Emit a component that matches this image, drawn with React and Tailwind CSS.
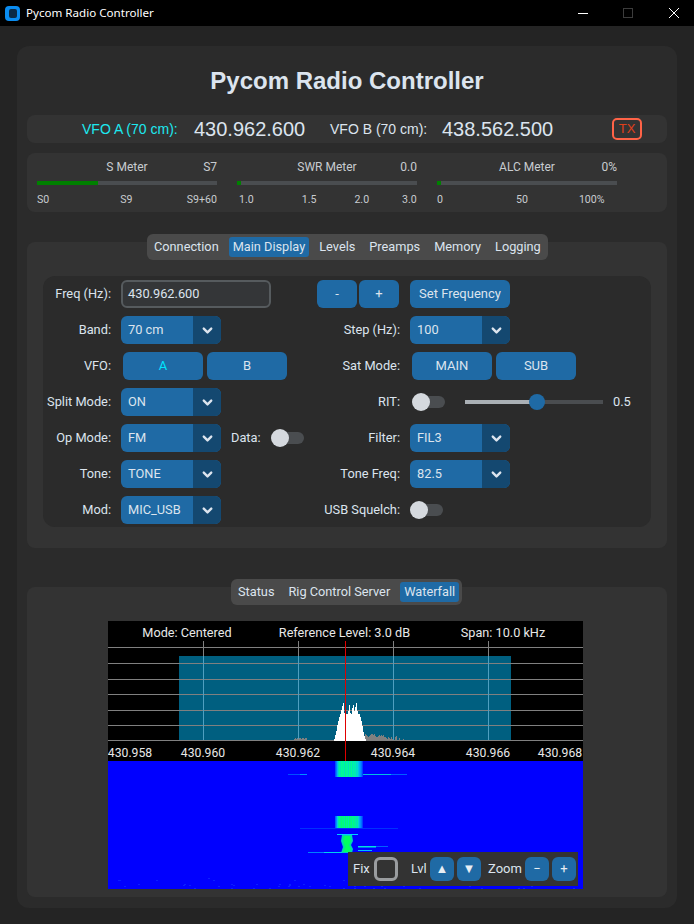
import { ChevronDown } from "lucide-react";

const UI_FONT = "font-['Roboto',sans-serif]";

// white signal hump, heights above the baseline, one per pixel from x=334
const SIGNAL = [2, 6, 10, 16, 20, 24, 27, 31, 35, 38, 28, 27, 27, 27, 30, 36, 28, 27, 33, 36, 30, 34, 38, 30, 27, 27, 24, 20, 15, 9, 5, 2];
const NOISE_LEFT = [1, 0, 1, 1, 1, 0, 2, 3, 2, 3, 2, 3, 3, 2, 3, 3, 2, 3, 3];
const NOISE_RIGHT = [7, 6, 5, 4, 5, 6, 7, 7, 6, 7, 5, 4, 4, 5, 6, 5, 6, 5, 6, 4, 4, 3, 2, 4, 3, 2, 4, 2, 1, 0, 4, 5, 1, 1, 3, 1, 0, 0, 2, 1, 1, 1];

const GRID_Y = [647, 663, 679, 694, 710, 725, 740];
const GRID_X = [203, 298, 393, 488];
const AXIS = [
	["430.958", 130],
	["430.960", 203],
	["430.962", 298],
	["430.964", 393],
	["430.966", 488],
	["430.968", 560],
];

// waterfall columns, left to right
const BAND_TOP = ["#0050ff", "#0080ff", "#00b8f8", "#00e0c0", "#00f8a0", "#00e8b0", "#00ff90", "#00f0a8", "#00ff90", "#00e0c0", "#00ff88", "#00f0a8", "#00f8a0", "#00e0c0", "#00ff90", "#00e8b0", "#00ff90", "#00e0c0", "#00f8a0", "#00e8b8", "#00f0b0", "#00d8d0", "#00e0c8", "#00c0f0", "#00a8f8", "#0090ff", "#0070ff", "#0040ff"];
const BAND_LOW = ["#0060ff", "#0090ff", "#00d0e8", "#00f0a0", "#00ff80", "#00f090", "#00ff70", "#00f090", "#00ff78", "#00e8a8", "#00ff70", "#00f098", "#00ff78", "#00e8b0", "#00ff70", "#00f090", "#00ff78", "#00e8a8", "#00ff80", "#00f098", "#00f0a0", "#00e0b8", "#00f0a0", "#00d0e0", "#00b0f0", "#0090ff", "#0070ff", "#0040ff"];

function Dropdown({ value }) {
	return (
		<div className="flex h-[28px] w-[100px] overflow-hidden rounded-[6px] bg-[#1f6aa5] text-[12.8px] text-[#dce4ee]">
			<span className="flex-1 pl-[7px] leading-[28px]">{value}</span>
			<span className="flex w-[28px] items-center justify-center bg-[#144870]">
				<ChevronDown className="h-[15px] w-[15px]" strokeWidth={3.8} />
			</span>
		</div>
	);
}

function Toggle({ className = "" }) {
	return (
		<div className={`relative h-[18px] w-[33px] shrink-0 ${className}`}>
			<span className="absolute left-[2px] right-0 top-[3px] h-[12px] rounded-full bg-[#4a4d50]" />
			<span className="absolute left-0 top-0 h-[18px] w-[18px] rounded-full bg-[#d5d9de]" />
		</div>
	);
}

function Btn({ children, className = "" }) {
	return (
		<button className={`h-[28px] rounded-[6px] bg-[#1f6aa5] text-[13px] text-[#dce4ee] ${className}`}>
			{children}
		</button>
	);
}

function Row({ left, leftControl, right, rightControl }) {
	return (
		<div className="flex h-[28px] items-center">
			<div className="flex w-[257px] shrink-0 items-center">
				<span className="w-[68px] shrink-0 whitespace-nowrap text-right text-[12.8px] text-[#dce4ee]">{left}</span>
				<div className="ml-[10px] flex shrink-0 items-center">{leftControl}</div>
			</div>
			<span className="flex w-[100px] shrink-0 justify-end whitespace-nowrap text-right text-[12.8px] text-[#dce4ee]">{right}</span>
			<div className="ml-[10px] flex items-center">{rightControl}</div>
		</div>
	);
}

function Meter({ title, value, fill, children }) {
	return (
		<div className="w-[180px]">
			<div className="grid h-[14px] grid-cols-[1fr_auto_1fr] items-center text-[12px] leading-[14px] text-[#c8ccd0]">
				<span />
				<span>{title}</span>
				<span className="text-right">{value}</span>
			</div>
			<div className="mt-[7px] h-[4px] bg-[#4a4d50]">
				<div className={`h-full bg-[#008000] ${fill}`} />
			</div>
			<div className="mt-[9px] flex h-[12px] items-center text-[10.6px] leading-[12px] text-[#c8ccd0]">{children}</div>
		</div>
	);
}

function TabBar({ tabs, active, className = "" }) {
	return (
		<div className={`relative z-10 flex h-[26px] items-center gap-[6px] rounded-[6px] bg-[#4a4a4a] px-[3px] text-[12.75px] text-[#dce4ee] ${className}`}>
			{tabs.map((t) => (
				<span key={t} className={`h-[20px] rounded-[3px] px-[4px] leading-[20px] ${t === active ? "bg-[#1f6aa5]" : ""}`}>
					{t}
				</span>
			))}
		</div>
	);
}

function SpectrumChart() {
	// faint speckle along the bottom of the waterfall
	const specks = [];
	for (let i = 1; i <= 70; i++) {
		specks.push([108 + ((i * i * 37 + i * 11) % 475), 878 + ((i * i * 13) % 11)]);
	}
	return (
		<svg viewBox="108 621 475 268" className="block h-[268px] w-[475px]">
			<rect x="108" y="621" width="475" height="268" fill="#000" />
			<rect x="179" y="656" width="332" height="84" fill="#005f80" />
			{GRID_Y.map((y) => (
				<line key={y} x1="108" x2="583" y1={y + 0.5} y2={y + 0.5} stroke="#808080" />
			))}
			{GRID_X.map((x) => (
				<g key={x}>
					<line x1={x + 0.5} x2={x + 0.5} y1="641" y2="656" stroke="#808080" />
					<line x1={x + 0.5} x2={x + 0.5} y1="656" y2="740" stroke="#4f9fc0" />
				</g>
			))}
			{NOISE_LEFT.map((h, i) => (
				<rect key={i} x={288 + i} y={741 - h} width="1" height={h} fill="#808080" />
			))}
			{NOISE_RIGHT.map((h, i) => (
				<rect key={i} x={365 + i} y={741 - h} width="1" height={h} fill="#808080" />
			))}
			{SIGNAL.map((h, i) => (
				<rect key={i} x={334 + i} y={741 - h} width="1" height={h} fill="#fff" />
			))}

			<g fontFamily="Roboto, sans-serif" fill="#e8e8e8">
				<g fontSize="12.7">
					<text x="187" y="637" textAnchor="middle">Mode: Centered</text>
					<text x="344.5" y="637" textAnchor="middle">Reference Level: 3.0 dB</text>
					<text x="503" y="637" textAnchor="middle">Span: 10.0 kHz</text>
				</g>
				<g fontSize="12.2">
					{AXIS.map(([label, x]) => (
						<text key={label} x={x} y="757" textAnchor="middle">{label}</text>
					))}
				</g>
			</g>

			<rect x="108" y="761" width="475" height="128" fill="#0000ff" />
			{specks.map(([x, y], i) => (
				<rect key={i} x={x} y={y} width="2" height="1" fill="#0a20ff" />
			))}
			{BAND_TOP.map((c, i) => (
				<rect key={i} x={335 + i} y="761" width="1" height="16" fill={c} />
			))}
			{BAND_LOW.map((c, i) => (
				<rect key={i} x={335 + i} y="816" width="1" height="12" fill={c} />
			))}
			<rect x="300" y="774" width="7" height="1" fill="#0090ff" />
			<rect x="288" y="774" width="12" height="1" fill="#0050ff" />
			<rect x="363" y="774" width="28" height="1" fill="#00c0e0" />
			<rect x="391" y="774" width="16" height="1" fill="#0060ff" />
			<rect x="300" y="828" width="98" height="1" fill="#0030ff" />
			<rect x="337" y="834" width="21" height="1" fill="#00d0ff" />
			<path d="M342 835 L352 835 L353 841 L351 845 L353 849 L352 853 L341 853 L343 847 L341 841 Z" fill="#00d8b0" />
			<path d="M344 836 L350 836 L351 841 L349 845 L351 849 L350 852 L343 852 L345 847 L343 841 Z" fill="#00ff60" />
			<rect x="358" y="846" width="18" height="1.5" fill="#00e0e0" />
			<rect x="376" y="846" width="12" height="1" fill="#0060ff" />
			<rect x="358" y="850" width="14" height="1" fill="#00c0ff" />
			<rect x="308" y="852" width="16" height="1" fill="#0080ff" />
			<rect x="324" y="852" width="18" height="1" fill="#00d0f0" />
			<line x1="345.5" x2="345.5" y1="641" y2="761" stroke="#e00000" />
		</svg>
	);
}

function WaterfallControls() {
	const small = "h-[24px] w-[24px] rounded-[6px] bg-[#1f6aa5] text-[#e8eef4]";
	return (
		<div className="absolute left-[240px] top-[231px] flex h-[34px] w-[230px] items-center bg-[#333333] text-[13px] text-[#dce4ee]">
			<span className="ml-[5px] w-[21px]">Fix</span>
			<span className="h-[24px] w-[24px] rounded-[6px] border-[3px] border-[#9a9da0]" />
			<span className="ml-[13px] w-[19px]">Lvl</span>
			<button className={`${small} text-[13px]`}>▲</button>
			<button className={`${small} ml-[3px] text-[13px]`}>▼</button>
			<span className="ml-[7px] w-[37px]">Zoom</span>
			<button className={small}>−</button>
			<button className={`${small} ml-[3px]`}>+</button>
		</div>
	);
}

export default function App() {
	return (
		<div className={`h-[924px] w-[694px] overflow-hidden bg-[#242424] ${UI_FONT}`}>
			{/* title bar */}
			<div className="flex h-[26px] items-center bg-black text-white">
				<span className="ml-[5px] flex h-[15px] w-[15px] items-center justify-center rounded-[4px] bg-[#0a8cf0]">
					<span className="h-[9px] w-[8px] rounded-[2px] bg-[#0b2a45]" />
				</span>
				<span className="ml-[6px] font-['Noto_Sans',sans-serif] text-[11.6px]">Pycom Radio Controller</span>
				<div className="ml-auto flex items-center">
					<span className="mr-[35px] h-[1px] w-[10px] bg-white" />
					<span className="mr-[36px] h-[10px] w-[10px] border border-[#3c3c3c]" />
					<svg viewBox="0 0 10 10" className="mr-[15px] h-[10px] w-[10px]" stroke="#fff" strokeWidth="1">
						<path d="M0 0 L10 10 M10 0 L0 10" />
					</svg>
				</div>
			</div>

			{/* main card */}
			<div className="mx-[17px] mt-[20px] h-[862px] rounded-[12px] bg-[#2b2b2b] px-[10px]">
				<h1 className="flex h-[69px] items-center justify-center pt-[1px] font-['Liberation_Sans',sans-serif] text-[24px] font-bold text-[#dce4ee]">
					Pycom Radio Controller
				</h1>

				<div className="flex h-[28px] items-center rounded-[8px] bg-[#333333] pl-[55px] font-['Liberation_Sans',sans-serif] text-[14px] text-[#dce4ee]">
					<span className="w-[97px] whitespace-nowrap text-[#1de9f0]">VFO A (70 cm):</span>
					<span className="ml-[15px] w-[111px] text-[20px]">430.962.600</span>
					<span className="ml-[25px] w-[97px] whitespace-nowrap">VFO B (70 cm):</span>
					<span className="ml-[15px] w-[111px] text-[20px]">438.562.500</span>
					<button className="ml-[59px] h-[22px] w-[30px] rounded-[5px] border-2 border-[#ff6347] text-[13px] leading-[18px] text-[#e0401a]">
						TX
					</button>
				</div>

				<div className="mt-[10px] flex h-[59px] gap-[20px] rounded-[8px] bg-[#333333] px-[10px] pt-[7px]">
					<Meter title="S Meter" value="S7" fill="w-[61px]">
						<span>S0</span>
						<span className="ml-[71px]">S9</span>
						<span className="ml-auto">S9+60</span>
					</Meter>
					<Meter title="SWR Meter" value="0.0" fill="w-[4px]">
						<span className="ml-[2px]">1.0</span>
						<span className="ml-[48px]">1.5</span>
						<span className="ml-[38px]">2.0</span>
						<span className="ml-[33px]">3.0</span>
					</Meter>
					<Meter title="ALC Meter" value="0%" fill="w-[4px]">
						<span>0</span>
						<span className="ml-[73px]">50</span>
						<span className="ml-[51px]">100%</span>
					</Meter>
				</div>

				{/* controls section */}
				<div className="mt-[22px] flex">
					<TabBar
						tabs={["Connection", "Main Display", "Levels", "Preamps", "Memory", "Logging"]}
						active="Main Display"
						className="ml-[120px]"
					/>
				</div>
				<div className="-mt-[18px] h-[306px] rounded-[8px] bg-[#333333] px-[16px] pt-[34px]">
					<div className="flex h-[251px] flex-col gap-[8px] rounded-[12px] bg-[#2b2b2b] pt-[4px]">
						<Row
							left="Freq (Hz):"
							leftControl={
								<div className="h-[28px] w-[150px] rounded-[6px] border-2 border-[#565b5e] bg-[#343638] pl-[5px] text-[12.8px] leading-[24px] text-[#dce4ee]">
									430.962.600
								</div>
							}
							right={
								<span className="mr-[1px] flex gap-[2px]">
									<Btn className="w-[40px]">-</Btn>
									<Btn className="w-[40px]">+</Btn>
								</span>
							}
							rightControl={<Btn className="w-[100px]">Set Frequency</Btn>}
						/>
						<Row left="Band:" leftControl={<Dropdown value="70 cm" />} right="Step (Hz):" rightControl={<Dropdown value="100" />} />
						<Row
							left="VFO:"
							leftControl={
								<div className="ml-[2px] flex gap-[4px]">
									<Btn className="w-[80px] text-[#00e5ff]!">A</Btn>
									<Btn className="w-[80px]">B</Btn>
								</div>
							}
							right="Sat Mode:"
							rightControl={
								<div className="ml-[2px] flex gap-[4px]">
									<Btn className="w-[80px]">MAIN</Btn>
									<Btn className="w-[80px]">SUB</Btn>
								</div>
							}
						/>
						<Row
							left="Split Mode:"
							leftControl={<Dropdown value="ON" />}
							right="RIT:"
							rightControl={
								<div className="ml-[2px] flex items-center">
									<Toggle />
									<div className="relative ml-[20px] h-[4px] w-[138px] bg-[#4a4d50]">
										<div className="h-full w-[72px] bg-[#aab0b5]" />
										<span className="absolute left-[64px] top-[-6px] h-[16px] w-[16px] rounded-full bg-[#1f6aa5]" />
									</div>
									<span className="ml-[10px] text-[12.8px] text-[#dce4ee]">0.5</span>
								</div>
							}
						/>
						<Row
							left="Op Mode:"
							leftControl={
								<div className="flex items-center">
									<Dropdown value="FM" />
									<span className="ml-[10px] text-[12.8px] text-[#dce4ee]">Data:</span>
									<Toggle className="ml-[10px]" />
								</div>
							}
							right="Filter:"
							rightControl={<Dropdown value="FIL3" />}
						/>
						<Row left="Tone:" leftControl={<Dropdown value="TONE" />} right="Tone Freq:" rightControl={<Dropdown value="82.5" />} />
						<Row left="Mod:" leftControl={<Dropdown value="MIC_USB" />} right="USB Squelch:" rightControl={<Toggle />} />
					</div>
				</div>

				{/* waterfall section */}
				<div className="mt-[31px] flex">
					<TabBar tabs={["Status", "Rig Control Server", "Waterfall"]} active="Waterfall" className="ml-[204px]" />
				</div>
				<div className="-mt-[18px] h-[310px] rounded-[8px] bg-[#333333] pl-[81px] pt-[34px]">
					<div className="relative w-[475px]">
						<SpectrumChart />
						<WaterfallControls />
					</div>
				</div>
			</div>
		</div>
	);
}
